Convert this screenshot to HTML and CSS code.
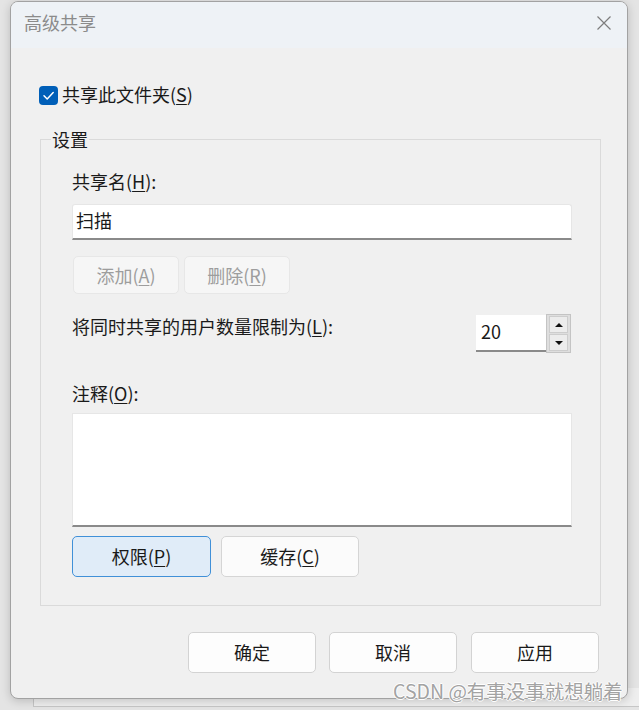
FILE: index.html
```html
<!DOCTYPE html>
<html lang="zh-CN">
<head>
<meta charset="utf-8">
<title>高级共享</title>
<link rel="stylesheet" href="styles.css">
</head>
<body>
<div class="behind"></div>
<div class="window">
  <div class="titlebar">
    <span class="title">高级共享</span>
    <svg class="close" viewBox="0 0 14 14" width="14" height="14"><path d="M0.5 0.5 L13.5 13.5 M13.5 0.5 L0.5 13.5" stroke="#7d7d7d" stroke-width="1.2" fill="none"/></svg>
  </div>
  <div class="content">
    <div class="check-row">
      <span class="checkbox"><svg viewBox="0 0 19 19" width="19" height="19"><polyline points="5,9.8 8.2,13 14.2,6.6" fill="none" stroke="#fff" stroke-width="1.5" stroke-linecap="round" stroke-linejoin="round"/></svg></span>
      <span class="check-label">共享此文件夹(<u>S</u>)</span>
    </div>
    <fieldset class="group">
      <legend>设置</legend>
      <div class="group-inner">
        <div class="label">共享名(<u>H</u>):</div>
        <div class="field">扫描</div>
        <div class="btn-row">
          <div class="btn btn-disabled">添加(<u>A</u>)</div>
          <div class="btn btn-disabled">删除(<u>R</u>)</div>
        </div>
        <div class="limit-row">
          <span class="label limit-label">将同时共享的用户数量限制为(<u>L</u>):</span>
          <div class="spinner">
            <div class="spin-input">20</div>
            <div class="spin-btns">
              <span class="spin-btn"><span class="tri-up"></span></span>
              <span class="spin-btn"><span class="tri-down"></span></span>
            </div>
          </div>
        </div>
        <div class="label note-label">注释(<u>O</u>):</div>
        <div class="memo"></div>
        <div class="btn-row2">
          <div class="btn btn-primary">权限(<u>P</u>)</div>
          <div class="btn btn-normal">缓存(<u>C</u>)</div>
        </div>
      </div>
    </fieldset>
    <div class="footer">
      <div class="btn btn-std">确定</div>
      <div class="btn btn-std">取消</div>
      <div class="btn btn-std btn-last">应用</div>
    </div>
  </div>
</div>
<div class="watermark">CSDN @有事没事就想躺着</div>
</body>
</html>
```
FILE: styles.css
```css
html, body {
  margin: 0;
  padding: 0;
}
body {
  width: 639px;
  height: 710px;
  overflow: hidden;
  position: relative;
  background: #e4e4e4;
  font-family: "Noto Sans CJK SC", "Microsoft YaHei", sans-serif;
  color: #1a1a1a;
}
u {
  text-decoration: underline;
  text-underline-offset: 2px;
  text-decoration-thickness: 1px;
}
.behind {
  position: absolute;
  left: 33px;
  top: 688px;
  right: -2px;
  height: 18px;
  background: #eeeeee;
  border-left: 1px solid #c6c6c6;
  border-bottom: 1px solid #c6c6c6;
}
.window {
  position: relative;
  margin: 1px 0 0 10px;
  width: 618px;
  height: 698px;
  box-sizing: border-box;
  border: 1px solid #a2a2a2;
  border-radius: 8px;
  background: #f0f0f0;
  box-shadow: 0 2px 10px rgba(0, 0, 0, 0.18);
  overflow: hidden;
  display: flex;
  flex-direction: column;
}
.titlebar {
  flex: none;
  height: 46px;
  box-sizing: border-box;
  background: #eef2f6;
  display: flex;
  align-items: center;
  justify-content: space-between;
  padding: 0 16px 6px 13px;
}
.title {
  font-size: 18px;
  line-height: 20px;
  color: #8b8b8b;
}
.close {
  display: block;
  margin-top: 2px;
}
.content {
  display: flex;
  flex-direction: column;
  padding: 37px 26px 0 29px;
}
.check-row {
  display: flex;
  align-items: center;
  gap: 4px;
  height: 20px;
  margin-left: -1px;
  font-size: 18px;
  line-height: 20px;
}
.check-label {
  position: relative;
  top: -1px;
}
.checkbox {
  width: 19px;
  height: 19px;
  border-radius: 4px;
  background: #005fb8;
  display: flex;
}
.group {
  margin: 25px 0 0 0;
  padding: 21px 28px 28px 10px;
  border: 1px solid #dadada;
  min-width: 0;
}
.group legend {
  font-size: 18px;
  line-height: 18px;
  padding: 0 1px;
  margin: 0;
}
.group-inner {
  display: flex;
  flex-direction: column;
  padding-left: 21px;
}
.label {
  font-size: 18px;
  line-height: 24px;
}
.field {
  margin-top: 11px;
  height: 36px;
  box-sizing: border-box;
  background: #fff;
  border: 1px solid #e6e6e6;
  border-bottom: 2px solid #8a8a8a;
  border-radius: 3px 3px 0 0;
  font-size: 18px;
  line-height: 30px;
  padding-left: 3px;
}
.btn-row {
  margin-top: 16px;
  display: flex;
  gap: 5px;
  padding-left: 1px;
}
.btn {
  box-sizing: border-box;
  border-radius: 5px;
  display: flex;
  align-items: center;
  justify-content: center;
  font-size: 18px;
  line-height: 22px;
  padding-bottom: 1px;
}
.btn-disabled {
  width: 106px;
  height: 38px;
  background: #f6f6f6;
  border: 1px solid #e7e7e7;
  color: #9d9d9d;
}
.limit-row {
  margin-top: 20px;
  display: flex;
  justify-content: space-between;
  align-items: flex-start;
}
.limit-label {
  margin-top: 0;
}
.spinner {
  display: flex;
  height: 39px;
  margin-right: 1px;
}
.spin-input {
  width: 70px;
  height: 37px;
  margin-top: 1px;
  box-sizing: border-box;
  background: #fff;
  border-bottom: 2px solid #8a8a8a;
  font-size: 18px;
  line-height: 32px;
  padding-left: 5px;
}
.spin-btns {
  width: 25px;
  height: 39px;
  box-sizing: border-box;
  border: 1px solid #c4c4c4;
  background: #dedede;
  display: flex;
  flex-direction: column;
  padding: 1px 2px;
  gap: 1px;
}
.spin-btn {
  flex: 1;
  background: #ececec;
  border: 1px solid #cdcdcd;
  display: flex;
  align-items: center;
  justify-content: center;
}
.tri-up {
  width: 0;
  height: 0;
  border-left: 4px solid transparent;
  border-right: 4px solid transparent;
  border-bottom: 4px solid #111;
}
.tri-down {
  width: 0;
  height: 0;
  border-left: 4px solid transparent;
  border-right: 4px solid transparent;
  border-top: 4px solid #111;
}
.note-label {
  margin-top: 28px;
}
.memo {
  margin-top: 8px;
  height: 114px;
  box-sizing: border-box;
  background: #fff;
  border: 1px solid #e6e6e6;
  border-bottom: 2px solid #8a8a8a;
}
.btn-row2 {
  margin-top: 9px;
  display: flex;
  gap: 10px;
}
.btn-primary {
  width: 139px;
  height: 41px;
  background: #e0ecf8;
  border: 1px solid #4090d8;
}
.btn-normal {
  width: 138px;
  height: 41px;
  background: #fbfbfb;
  border: 1px solid #d5d5d5;
}
.footer {
  margin-top: 26px;
  margin-right: 2px;
  display: flex;
  justify-content: flex-end;
  gap: 13px;
}
.btn-std {
  width: 128px;
  height: 41px;
  background: #fdfdfd;
  border: 1px solid #d3d3d3;
}
.btn-last {
  margin-left: 1px;
}
.watermark {
  position: absolute;
  left: 393px;
  top: 679px;
  font-size: 19.5px;
  line-height: 24px;
  color: #a3a3a3;
  white-space: nowrap;
  text-shadow: 1px 0 0 #fff, -1px 0 0 #fff, 0 1px 0 #fff, 0 -1px 0 #fff;
}
```
